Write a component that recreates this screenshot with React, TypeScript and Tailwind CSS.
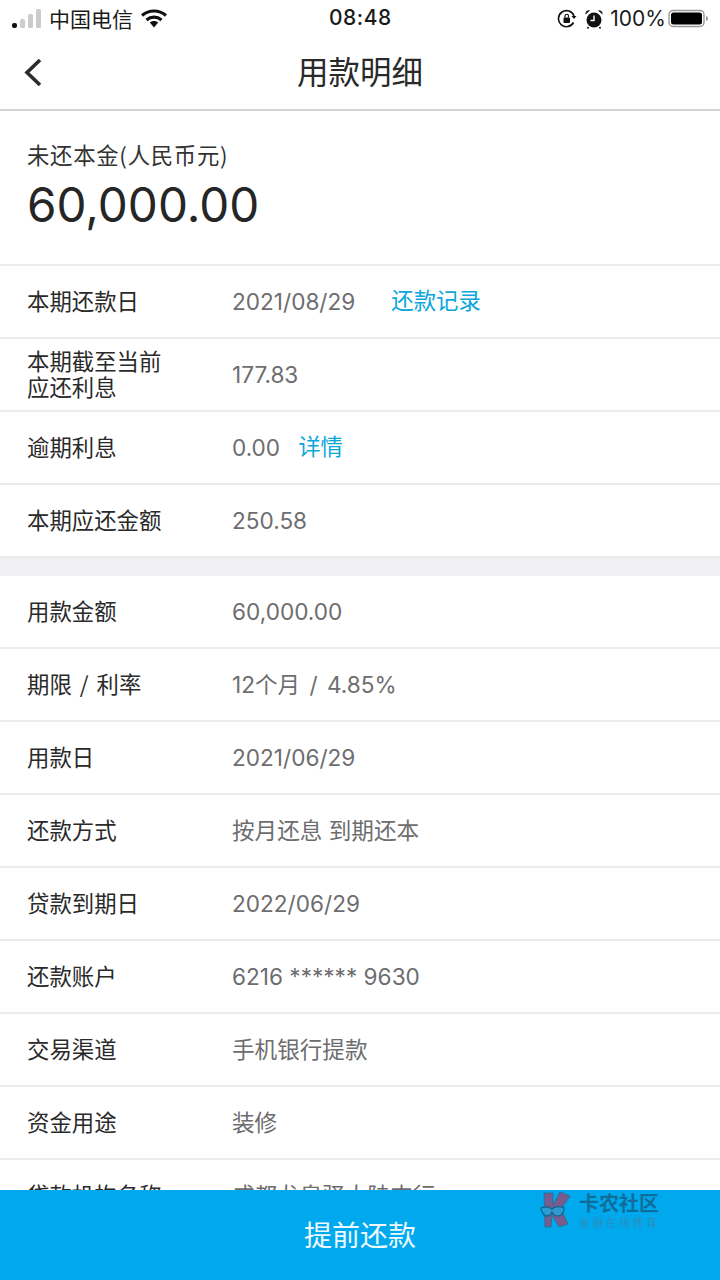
import React from "react";

const font = { fontFamily: '"Noto Sans CJK SC", "Noto Sans", sans-serif' };

function Row({ label, value, link, gap, wide }: { label: React.ReactNode; value: string; link?: string; gap?: string; wide?: boolean }) {
  return (
    <div className="flex h-[73px] items-center border-b-2 border-[#ececee] bg-white pb-[3px] pl-[27px] shrink-0">
      <div className={`w-[205px] shrink-0 text-[22.4px] leading-[26px] text-[#2a2a2a] ${wide ? "[word-spacing:3px]" : ""}`}>{label}</div>
      <div className={`pt-[3px] text-[22.6px] text-[#6d6d6f] ${gap ?? ""} ${wide ? "[word-spacing:3px]" : ""}`} style={{ fontFamily: '"Inter", "Noto Sans CJK SC", sans-serif' }}>{value}</div>
      {link && <div className="text-[22.4px] text-[#0ba6dc]">{link}</div>}
    </div>
  );
}

export default function App() {
  return (
    <div className="relative flex h-[1280px] w-[720px] flex-col overflow-hidden bg-white" style={font}>
      <div className="relative flex h-[37px] items-center pl-[12px] pr-[10px] text-[21px] text-[#1a1a1a] shrink-0">
        <svg width="30" height="20" viewBox="0 0 30 20" className="shrink-0">
          <rect x="0" y="14" width="5" height="5" rx="2" fill="#111" />
          <rect x="8" y="10" width="5" height="9" rx="1.5" fill="#ccc" />
          <rect x="16" y="5" width="5" height="14" rx="1.5" fill="#ccc" />
          <rect x="24" y="0" width="5" height="19" rx="1.5" fill="#ccc" />
        </svg>
        <span className="ml-[7px] w-[92px] text-[21px]">中国电信</span>
        <svg width="26" height="20" viewBox="0 0 26 20" className="shrink-0">
          <path d="M1 6.500C8 .5 18 .5 25 6.500" stroke="#111" strokeWidth="3.2" fill="none" />
          <path d="M5.500 11C10 7.200 16 7.200 20.500 11" stroke="#111" strokeWidth="3.2" fill="none" />
          <path d="M8.800 13.600C11.200 11.600 14.800 11.600 17.200 13.600L13 18.500Z" fill="#111" />
        </svg>
        <span className="absolute left-[329px] top-[3px] text-[21px] font-medium leading-[30px] tracking-[0.5px]" style={{ fontFamily: '"Inter", sans-serif' }}>08:48</span>
        <div className="ml-auto flex items-center">
          <svg width="20" height="20" viewBox="0 0 20 20" className="shrink-0">
            <path d="M16.500 13.500A8 8 0 1 1 17 7" stroke="#111" strokeWidth="1.6" fill="none" />
            <path d="M14.500 7h5l-2.500 3z" fill="#111" />
            <rect x="6.500" y="8.500" width="6.500" height="5.500" rx="1" fill="#111" />
            <path d="M8 8.500V7a1.700 1.700 0 0 1 3.500 0v1.500" stroke="#111" strokeWidth="1.2" fill="none" />
          </svg>
          <svg width="20" height="20" viewBox="0 0 20 20" className="ml-[7px] shrink-0">
            <circle cx="10" cy="11" r="7.500" fill="#111" />
            <path d="M1.500 5.500A3.500 3.500 0 0 1 6 1.500z" fill="#111" />
            <path d="M18.500 5.500A3.500 3.500 0 0 0 14 1.500z" fill="#111" />
            <path d="M4.500 18L3.500 19.500M15.500 18L16.500 19.500" stroke="#111" strokeWidth="1.6" />
            <path d="M10 6.500V11.500H6.500" stroke="#fff" strokeWidth="1.4" fill="none" />
          </svg>
          <span className="ml-[6px] text-[21px]" style={{ fontFamily: '"Inter", sans-serif' }}>100%</span>
          <svg width="42" height="20" viewBox="0 0 42 20" className="ml-[2px] shrink-0">
            <rect x="1" y="1.500" width="35" height="16" rx="4" fill="none" stroke="#999" strokeWidth="1.4" />
            <rect x="3" y="3.500" width="31" height="12" rx="2.500" fill="#000" />
            <path d="M38 7c1.500.4 2 1.400 2 2.500s-.5 2.100-2 2.500z" fill="#999" />
          </svg>
        </div>
      </div>

      <div className="relative flex h-[74px] items-center justify-center border-b-2 border-[#d4d4d6] pb-[4px] shrink-0">
        <svg width="20" height="32" viewBox="0 0 20 32" className="absolute left-[23px] top-[20px]">
          <path d="M17 3 L4 15.500 L17 28" stroke="#2c2c2c" strokeWidth="3.6" fill="none" />
        </svg>
        <span className="text-[31.5px] text-[#2a2a2a]">用款明细</span>
      </div>

      <div className="flex h-[155px] flex-col border-b-2 border-[#ececee] pl-[27px] pt-[27px] shrink-0">
        <div className="text-[22.4px] leading-[32px] tracking-[0.7px] text-[#333]">未还本金(人民币元)</div>
        <div className="mt-[6px] text-[47.6px] leading-[58px] text-[#262626]" style={{ fontFamily: '"Inter", sans-serif' }}>60,000.00</div>
      </div>

      <Row label="本期还款日" value="2021/08/29" link="还款记录" gap="mr-[36px]" />
      <Row label={<>本期截至当前<br />应还利息</>} value="177.83" />
      <Row label="逾期利息" value="0.00" link="详情" gap="mr-[18px]" />
      <Row label="本期应还金额" value="250.58" />
      <div className="h-[18px] bg-[#f0f0f4] shrink-0" />
      <Row label="用款金额" value="60,000.00" />
      <Row label="期限 / 利率" value="12个月 / 4.85%" wide />
      <Row label="用款日" value="2021/06/29" />
      <Row label="还款方式" value="按月还息 到期还本" />
      <Row label="贷款到期日" value="2022/06/29" />
      <Row label="还款账户" value="6216 ****** 9630" />
      <Row label="交易渠道" value="手机银行提款" />
      <Row label="资金用途" value="装修" />
      <div className="flex h-[73px] items-center bg-white pb-[4px] pl-[27px] shrink-0">
        <div className="w-[205px] shrink-0 text-[22.4px] text-[#2a2a2a]">贷款机构名称</div>
        <div className="text-[22.6px] text-[#6d6d6f]">成都龙泉驿大陆支行</div>
      </div>

      <div className="absolute bottom-0 left-0 flex h-[90px] w-[720px] items-center justify-center bg-[#00a9ee] pb-[2px] text-[28px] text-[#eef9ff]">
        提前还款
      </div>
      <div className="absolute left-[540px] top-[1192px] flex items-start">
        <svg width="36" height="36" viewBox="0 0 36 36">
          <path d="M4 1h9v12L20 0l10 4-9 13 7 15-9 3-7-12-1 12H5z" fill="#7a5b8e" stroke="#1f6f99" strokeWidth="0.8" />
          <path d="M1 16c3-1.500 8-1.500 11 1 3-2.500 8-3 12-1 0 4-2 8-6 8-3 0-5-2-6-4-1 3-3 4-5 4-3 0-5-3-6-8z" fill="#1ea9dd" fillOpacity="0.8" stroke="#0b6a95" strokeWidth="1.4" />
        </svg>
        <div className="ml-[3px] flex flex-col">
          <span className="text-[20px] font-bold leading-[22px] text-[#0f6d99]">卡农社区</span>
          <span className="text-[11px] leading-[16px] tracking-[2.4px] text-[#2b8fbd]">金融在线教育</span>
        </div>
      </div>
    </div>
  );
}
